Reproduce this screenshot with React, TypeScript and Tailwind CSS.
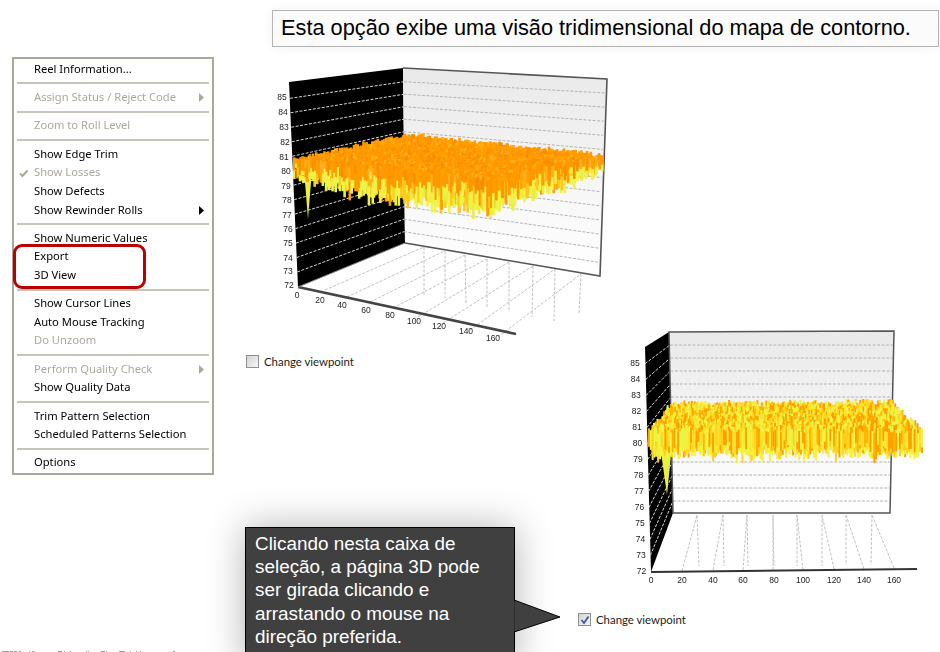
import React from "react";

type Pt = [number, number];

type Bar = { x: number; y: number; w: number; h: number; fill: string };

interface SurfaceConfig {
  backLeft: Pt;
  backRight: Pt;
  frontLeft: Pt;
  frontRight: Pt;
  cols: number;
  rows: number;
  barWidth: number;
  noise: number;
  topLen: Pt;
  lowLen: Pt;
  edge: number;
  taper: boolean;
  top: string[];
  low: string[];
  seed: number;
}

const makeRandom = (seed: number) => {
  let s = seed;
  return () => {
    s = (s + 0x6d2b79f5) | 0;
    let t = Math.imul(s ^ (s >>> 15), 1 | s);
    t = (t + Math.imul(t ^ (t >>> 7), 61 | t)) ^ t;
    return ((t ^ (t >>> 14)) >>> 0) / 4294967296;
  };
};

const buildSurface = (cfg: SurfaceConfig) => {
  const rnd = makeRandom(cfg.seed);
  const bars: Bar[] = [];
  const pick = (list: string[]) => list[Math.floor(rnd() * list.length)];
  for (let r = 0; r < cfg.rows; r++) {
    const b = r / (cfg.rows - 1);
    for (let c = 0; c < cfg.cols; c++) {
      const a = c / (cfg.cols - 1);
      const x =
        (1 - b) * ((1 - a) * cfg.backLeft[0] + a * cfg.backRight[0]) +
        b * ((1 - a) * cfg.frontLeft[0] + a * cfg.frontRight[0]);
      const y =
        (1 - b) * ((1 - a) * cfg.backLeft[1] + a * cfg.backRight[1]) +
        b * ((1 - a) * cfg.frontLeft[1] + a * cfg.frontRight[1]);
      const top = y + (rnd() - 0.5) * cfg.noise;
      // the chart hangs shallower towards the two far corners
      const scale = cfg.taper ? (0.5 + 0.5 * Math.min(1, a * 2.2)) * (0.45 + 0.55 * b) : 1;
      const topLen = (cfg.topLen[0] + rnd() * (cfg.topLen[1] - cfg.topLen[0])) * (cfg.taper ? 0.6 + 0.4 * scale : 1);
      const onEdge = r >= cfg.rows - cfg.edge || c >= cfg.cols - cfg.edge;
      if (onEdge) {
        const lowLen = (cfg.lowLen[0] + rnd() * (cfg.lowLen[1] - cfg.lowLen[0])) * scale;
        bars.push({ x, y: top + topLen - 1, w: cfg.barWidth, h: lowLen, fill: pick(cfg.low) });
      }
      bars.push({ x, y: top, w: cfg.barWidth, h: topLen, fill: pick(cfg.top) });
    }
  }
  return bars;
};

const surfaceOne = buildSurface({
  backLeft: [403, 135],
  backRight: [601, 155],
  frontLeft: [293, 160],
  frontRight: [492, 180],
  cols: 105,
  rows: 36,
  barWidth: 2.6,
  noise: 6,
  topLen: [6, 20],
  lowLen: [8, 24],
  edge: 4,
  taper: true,
  top: ["#ff9900", "#ff9900", "#ff9400", "#ffa200", "#f58e00", "#ffb01c", "#ff9c00"],
  low: ["#eef53f", "#e6f040", "#f2f04a", "#f2f04a", "#ffc81e", "#ff9d00"],
  seed: 41,
});

const surfaceTwo = buildSurface({
  backLeft: [670, 404],
  backRight: [892, 402],
  frontLeft: [648, 430],
  frontRight: [921, 430],
  cols: 150,
  rows: 14,
  barWidth: 2,
  noise: 7,
  topLen: [12, 24],
  lowLen: [3, 10],
  edge: 3,
  taper: false,
  top: ["#ffa200", "#ff9d00", "#ffb400", "#ffd21e", "#eef53f", "#f4f040", "#e6f548", "#ffe02a"],
  low: ["#eef53f", "#f2f04a", "#f4f040", "#ffa200", "#ffd21e"],
  seed: 97,
});

const TICK_FONT = "'Liberation Sans', sans-serif";

const AxisText = ({ x, y, children }: { x: number; y: number; children: React.ReactNode }) => (
  <text x={x} y={y} fontSize={8.5} fontFamily={TICK_FONT} fill="#222" textAnchor="middle" dominantBaseline="middle">
    {children}
  </text>
);

const Dash = ({ a, b, color = "#b4b4b4" }: { a: Pt; b: Pt; color?: string }) => (
  <line x1={a[0]} y1={a[1]} x2={b[0]} y2={b[1]} stroke={color} strokeWidth={1} strokeDasharray="3 1.5" />
);

const ChartOne = () => {
  const yLabels: [string, number, number][] = [
    ["85", 282, 98], ["84", 283, 113], ["83", 284, 128], ["82", 285, 143], ["81", 284, 158],
    ["80", 286, 172], ["79", 286, 187], ["78", 287, 201], ["77", 287, 216], ["76", 288, 230],
    ["75", 288, 244], ["74", 288, 259], ["73", 288, 272], ["72", 289, 286],
  ];
  const xLabels: [string, number, number][] = [
    ["0", 297, 296], ["20", 320, 301], ["40", 342, 306], ["60", 366, 311], ["80", 390, 316],
    ["100", 414, 322], ["120", 439, 327], ["140", 466, 332], ["160", 493, 339],
  ];
  const floor: [Pt, Pt, Pt][] = [
    [[325, 290], [424, 247], [424, 295]],
    [[347, 297], [445, 251], [445, 298]],
    [[370, 302], [465, 255], [466, 303]],
    [[393, 308], [487, 259], [487, 308]],
    [[418, 317], [509, 262], [509, 312]],
    [[443, 323], [533, 266], [532, 317]],
    [[470, 330], [555, 269], [554, 321]],
    [[498, 337], [581, 274], [579, 313]],
  ];
  return (
    <svg className="blur-[0.3px]" width={374} height={290} viewBox="246 60 374 290">
      <defs>
        <linearGradient id="wallOne" x1="0" y1="0" x2="0" y2="1">
          <stop offset="0" stopColor="#e9e9e9" />
          <stop offset="0.55" stopColor="#f6f6f6" />
          <stop offset="1" stopColor="#ffffff" />
        </linearGradient>
      </defs>
      <polygon points="289,82 403,68 405,243 298,287" fill="#000" />
      <polygon points="403,68 607,79 600,276 405,243" fill="url(#wallOne)" />
      {Array.from({ length: 13 }, (_, i) => (
        <g key={i}>
          <Dash a={[290 + i * 0.6, 98.3 + i * 14.48]} b={[404, 81.7 + i * 12.5]} color="#d8d8d8" />
          <Dash a={[404, 81.7 + i * 12.5]} b={[605 - i * 0.6, 93 + i * 14.1]} />
        </g>
      ))}
      {floor.map(([a, b, c], i) => (
        <g key={i}>
          <Dash a={a} b={b} color="#c0c0c0" />
          <Dash a={b} b={c} color="#c0c0c0" />
        </g>
      ))}
      <polyline points="403,68 607,79 600,276 405,243" fill="none" stroke="#555" strokeWidth={1.6} />
      <line x1={298} y1={287} x2={516} y2={334} stroke="#444" strokeWidth={2.6} />
      <line x1={298} y1={287} x2={405} y2={243} stroke="#888" strokeWidth={1} />
      <polygon points="304,170 312,170 308,219" fill="#e8f040" />
      {surfaceOne.map((b, i) => (
        <rect key={i} x={b.x} y={b.y} width={b.w} height={b.h} fill={b.fill} />
      ))}
      {yLabels.map(([t, x, y]) => (
        <AxisText key={t} x={x} y={y}>{t}</AxisText>
      ))}
      {xLabels.map(([t, x, y]) => (
        <AxisText key={t} x={x} y={y}>{t}</AxisText>
      ))}
    </svg>
  );
};

const ChartTwo = () => {
  const yLabels = ["85", "84", "83", "82", "81", "80", "79", "78", "77", "76", "75", "74", "73", "72"];
  const xLabels: [string, number][] = [
    ["0", 651], ["20", 682], ["40", 713], ["60", 743], ["80", 774],
    ["100", 803], ["120", 834], ["140", 864], ["160", 894],
  ];
  const floor: [Pt, Pt, Pt][] = [
    [[682, 571], [697, 515], [699, 566]],
    [[713, 570], [723, 515], [724, 566]],
    [[743, 570], [747, 515], [748, 566]],
    [[773, 570], [773, 515], [774, 566]],
    [[803, 570], [797, 515], [797, 566]],
    [[834, 569], [822, 515], [822, 566]],
    [[864, 569], [846, 515], [846, 565]],
    [[894, 568], [872, 515], [871, 565]],
  ];
  return (
    <svg className="blur-[0.3px]" width={362} height={270} viewBox="578 320 362 270">
      <defs>
        <linearGradient id="wallTwo" x1="0" y1="0" x2="0" y2="1">
          <stop offset="0" stopColor="#e9e9e9" />
          <stop offset="0.55" stopColor="#f6f6f6" />
          <stop offset="1" stopColor="#ffffff" />
        </linearGradient>
      </defs>
      <polygon points="669,332 645,347 651,572 673,513" fill="#000" />
      <polygon points="669,332 894,331 890,513 673,513" fill="url(#wallTwo)" />
      {Array.from({ length: 13 }, (_, i) => (
        <g key={i}>
          <Dash a={[645 + i * 0.45, 363.7 + i * 15.97]} b={[670 + i * 0.25, 345 + i * 13]} color="#d8d8d8" />
          <Dash a={[670 + i * 0.25, 345 + i * 13]} b={[893 - i * 0.3, 345 + i * 13]} />
        </g>
      ))}
      {floor.map(([a, b, c], i) => (
        <g key={i}>
          <Dash a={a} b={b} color="#c0c0c0" />
          <Dash a={b} b={c} color="#c0c0c0" />
        </g>
      ))}
      <polygon points="669,332 894,331 890,513 673,513" fill="none" stroke="#555" strokeWidth={1.5} />
      <line x1={651} y1={572} x2={917} y2={569} stroke="#333" strokeWidth={2} />
      <polygon points="660,445 672,445 667,495" fill="#e8f040" />
      {surfaceTwo.map((b, i) => (
        <rect key={i} x={b.x} y={b.y} width={b.w} height={b.h} fill={b.fill} />
      ))}
      {yLabels.map((t, i) => (
        <AxisText key={t} x={635 + i * 0.5} y={363.7 + i * 15.97}>{t}</AxisText>
      ))}
      {xLabels.map(([t, x]) => (
        <AxisText key={t} x={x} y={581}>{t}</AxisText>
      ))}
    </svg>
  );
};

type MenuEntry = { label?: string; off?: boolean; arrow?: boolean; check?: boolean };

const menu: MenuEntry[] = [
  { label: "Reel Information..." },
  {},
  { label: "Assign Status / Reject Code", off: true, arrow: true },
  {},
  { label: "Zoom to Roll Level", off: true },
  {},
  { label: "Show Edge Trim" },
  { label: "Show Losses", off: true, check: true },
  { label: "Show Defects" },
  { label: "Show Rewinder Rolls", arrow: true },
  {},
  { label: "Show Numeric Values" },
  { label: "Export" },
  { label: "3D View" },
  {},
  { label: "Show Cursor Lines" },
  { label: "Auto Mouse Tracking" },
  { label: "Do Unzoom", off: true },
  {},
  { label: "Perform Quality Check", off: true, arrow: true },
  { label: "Show Quality Data" },
  {},
  { label: "Trim Pattern Selection" },
  { label: "Scheduled Patterns Selection" },
  {},
  { label: "Options" },
];

const ContextMenu = () => (
  <div className="absolute left-[12px] top-[57px] flex w-[202px] flex-col border-2 border-[#aca899] bg-white py-[1px] font-['Noto_Sans',sans-serif] text-[11.2px] blur-[0.25px]">
    {menu.map((item, i) =>
      item.label ? (
        <div key={i} className={`relative flex h-[18.6px] items-center pl-[20px] ${item.off ? "text-[#aca899]" : "text-black"}`}>
          {item.check && (
            <svg className="absolute left-[5px] top-[6px]" width={10} height={9} viewBox="0 0 10 9">
              <path d="M1 4.5 L3.5 7 L8.5 1.5" fill="none" stroke="#aca899" strokeWidth={2} />
            </svg>
          )}
          <span className="whitespace-nowrap">{item.label}</span>
          {item.arrow && (
            <svg className="absolute left-[185px] top-[5px]" width={5} height={9} viewBox="0 0 5 9">
              <path d="M0 0 L5 4.5 L0 9 Z" fill={item.off ? "#aca899" : "#000"} />
            </svg>
          )}
        </div>
      ) : (
        <div key={i} className="flex h-[9.7px] items-center px-[3px]">
          <div className="h-[2px] w-full bg-[#c6c4bb]" />
        </div>
      )
    )}
  </div>
);

const ViewpointCheck = ({ checked }: { checked?: boolean }) => (
  <div className="flex items-center gap-[5px] font-['Lato',sans-serif] text-[11.4px] text-[#1c1c1c]">
    <div className="flex h-[13px] w-[13px] items-center justify-center border border-[#8e8f8f] bg-gradient-to-br from-[#d4d4d4] to-[#f6f6f6]">
      {checked && (
        <svg width={10} height={10} viewBox="0 0 10 10">
          <path d="M1.5 5 L4 8 L8.5 1.5" fill="none" stroke="#3d5a9e" strokeWidth={1.8} />
        </svg>
      )}
    </div>
    <span className="whitespace-nowrap">Change viewpoint</span>
  </div>
);

const footerMarks: Pt[] = [
  [2, 7], [10, 3], [14, 3], [19, 2], [29, 1], [32, 2], [58, 4], [64, 1], [70, 1], [86, 1],
  [88, 1], [101, 4], [106, 1], [119, 6], [130, 1], [136, 1], [140, 1], [173, 2],
];

export default function App() {
  return (
    <div className="relative h-[652px] w-[940px] overflow-hidden bg-white font-['Liberation_Sans',sans-serif]">
      <div className="absolute left-[272px] top-[10px] flex h-[37px] w-[667px] items-center border border-[#b4b4b4] bg-[#fbfbfb] pl-[8px] text-[21.75px] text-black shadow-[0_0_12px_rgba(0,0,0,0.06)]">
        <span className="whitespace-nowrap">Esta opção exibe uma visão tridimensional do mapa de contorno.</span>
      </div>

      <ContextMenu />
      <div className="absolute left-[13px] top-[244px] h-[45px] w-[133px] rounded-[9px] border-[3px] border-[#bb0000]" />

      <div className="absolute left-[246px] top-[60px] flex flex-col gap-[3px]">
        <ChartOne />
        <ViewpointCheck />
      </div>

      <div className="absolute left-[578px] top-[320px] flex flex-col gap-[21px]">
        <ChartTwo />
        <ViewpointCheck checked />
      </div>

      <div className="absolute left-[245px] top-[527px] flex items-start">
        <div className="h-[140px] w-[270px] border border-black bg-[#404040] px-[9px] pt-[4px] text-[18.9px] leading-[23.2px] text-white shadow-[0_0_36px_rgba(0,0,0,0.3)]">
          Clicando nesta caixa de
          <br />
          seleção, a página 3D pode
          <br />
          ser girada clicando e
          <br />
          arrastando o mouse na
          <br />
          direção preferida.
        </div>
        <svg className="z-10 -ml-[1px] mt-[71px]" width={48} height={36} viewBox="514 598 48 36">
          <polygon points="514,600 560,617 514,632" fill="#404040" stroke="#000" strokeWidth={1} />
          <rect x={513} y={601} width={1.5} height={30} fill="#404040" />
        </svg>
      </div>

      <svg className="absolute left-0 top-[650px]" width={180} height={2} viewBox="0 0 180 2">
        {footerMarks.map(([x, w]) => (
          <rect key={x} x={x} y={1} width={w} height={1} fill="#9a9a9a" />
        ))}
      </svg>
    </div>
  );
}
